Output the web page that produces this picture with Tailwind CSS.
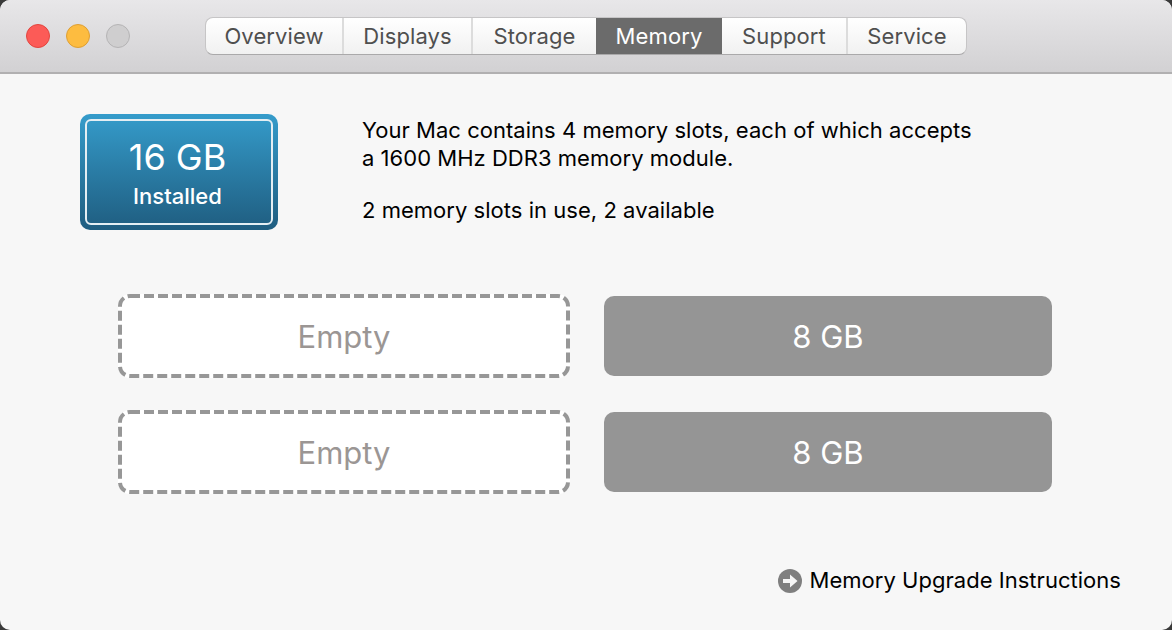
<!DOCTYPE html>
<html lang="en">
<head>
    <meta charset="UTF-8">
    <title>About This Mac</title>
    <script src="https://cdn.jsdelivr.net/npm/@tailwindcss/browser@4"></script>
</head>
<body class="w-[1172px] h-[630px] overflow-hidden bg-[#3a3a3a] font-['Inter','Liberation_Sans',sans-serif]">
    <div class="w-full h-full flex flex-col bg-[#f7f7f7] rounded-[10px] overflow-hidden">

        <!-- Title bar -->
        <div class="h-[74px] flex items-start relative border-b-2 border-[#b1b0b1] bg-gradient-to-b from-[#e8e7e9] to-[#d2d1d3]">
            <div class="flex gap-4 ml-[26px] mt-6">
                <div class="w-6 h-6 rounded-full bg-[#fc5b57] border border-[#e2463f]"></div>
                <div class="w-6 h-6 rounded-full bg-[#fdbc40] border border-[#de9f34]"></div>
                <div class="w-6 h-6 rounded-full bg-[#cfcecf] border border-[#b5b4b5]"></div>
            </div>
            <div class="flex ml-[75px] mt-[17px] h-[38px] rounded-lg border border-[#c6c5c6] border-b-[#aaa9aa] overflow-hidden bg-gradient-to-b from-white to-[#f1f1f1] text-[22px] tracking-[0.1px] text-[#4f4f4f]">
                <div class="w-[138px] flex items-center justify-center border-r-2 border-[#dcdcdc]">Overview</div>
                <div class="w-[129px] flex items-center justify-center border-r-2 border-[#dcdcdc]">Displays</div>
                <div class="w-[123px] flex items-center justify-center">Storage</div>
                <div class="w-[126px] flex items-center justify-center bg-[#6b6b6b] text-white">Memory</div>
                <div class="w-[126px] flex items-center justify-center border-r-2 border-[#dcdcdc]">Support</div>
                <div class="w-[118px] flex items-center justify-center">Service</div>
            </div>
        </div>

        <!-- Summary -->
        <div class="flex mt-10 ml-20">
            <div class="w-[198px] h-[116px] p-[5px] rounded-[10px] bg-gradient-to-b from-[#359ccb] to-[#1f5d80]">
                <div class="w-full h-full pr-[3px] flex flex-col items-center rounded-md border-2 border-[#e4eef3] text-white">
                    <div class="mt-4 text-[36px] leading-10">16 GB</div>
                    <div class="mt-[5px] text-[22px] leading-7 font-[450]">Installed</div>
                </div>
            </div>
            <div class="ml-[84px] mt-[2px] text-[22px] leading-7 tracking-[0.03px] text-black">
                <p>Your Mac contains 4 memory slots, each of which accepts</p>
                <p>a 1600 MHz DDR3 memory module.</p>
                <p class="mt-6">2 memory slots in use, 2 available</p>
            </div>
        </div>

        <!-- Slots -->
        <div class="grid grid-cols-[452px_448px] gap-x-[34px] gap-y-8 ml-[118px] mt-[64px] items-center">
            <div class="h-[84px] pt-[2px] relative flex items-center justify-center rounded-xl bg-white text-[31px] text-[#9b9694]">
                <svg class="absolute inset-0" width="452" height="84" fill="none"><rect x="2" y="2" width="448" height="80" rx="10" stroke="#979797" stroke-width="4" stroke-dasharray="10 4"/></svg>
                Empty
            </div>
            <div class="h-20 pt-[2px] flex items-center justify-center rounded-[10px] bg-[#959595] text-[31px] text-white">8 GB</div>
            <div class="h-[84px] pt-[2px] relative flex items-center justify-center rounded-xl bg-white text-[31px] text-[#9b9694]">
                <svg class="absolute inset-0" width="452" height="84" fill="none"><rect x="2" y="2" width="448" height="80" rx="10" stroke="#979797" stroke-width="4" stroke-dasharray="10 4"/></svg>
                Empty
            </div>
            <div class="h-20 pt-[2px] flex items-center justify-center rounded-[10px] bg-[#959595] text-[31px] text-white">8 GB</div>
        </div>

        <!-- Upgrade link -->
        <div class="flex items-center justify-end gap-[7px] mt-[70px] mr-[51px] text-[22px] tracking-[0.03px] text-black">
            <svg width="24" height="24" viewBox="0 0 24 24"><circle cx="12" cy="12" r="12" fill="#7f7f7f"/><path d="M5 10h7V5.500l7.500 6.500-7.500 6.500V14H5z" fill="#f6f6f6"/></svg>
            <span>Memory Upgrade Instructions</span>
        </div>
    </div>
</body>
</html>
